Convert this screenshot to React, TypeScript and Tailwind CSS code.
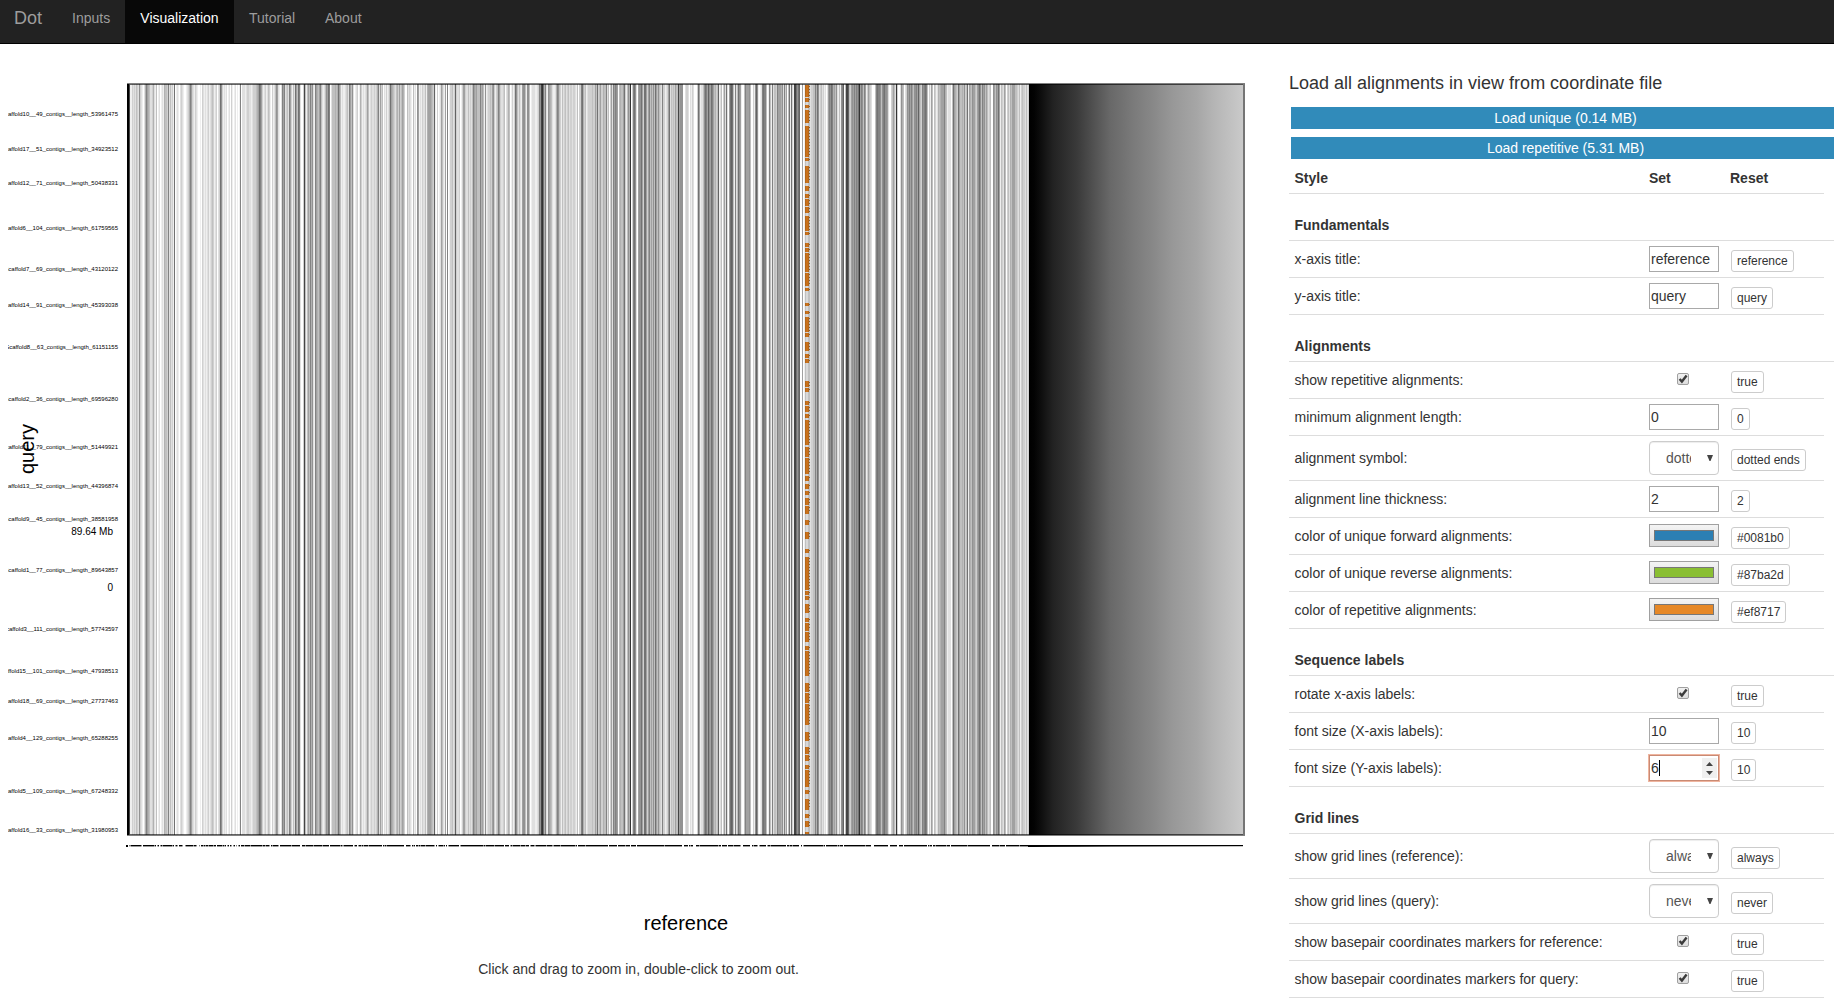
import React from "react";

/* Grey level of every pixel column of the grid, one hex digit each, from x=130. */
const COLUMNS = [
  "eecdcdbcd8", "cdefda79ab", "ddcadebfed", "fedeabbc7d", "bdce6fedef", "dcdeffedca",
  "79cdecdeff", "efcdededce", "dcbcedcfdc", "68cededfed", "fcefedfefe", "7fdddedccd",
  "dedcccba96", "79cedcedbc", "efcedb89de", "fd797dcbd7", "9cebd69b67", "dffc4beb9b",
  "7a8de79ab9", "7bdedb8967", "fdbbbaba69", "bedeedcbd7", "9b8dfedcfe", "acededc9be",
  "dcddcdca7d", "9cbfdecedb", "69abcdbac9", "cb9acffbdc", "defbedf89e", "decddbea99",
  "9abc5efcfe", "d9bde9f7fe", "ccbdc5cddc", "fec99cddbd", "cdb79a9bbb", "7a9be8edcc",
  "bc98cecb79", "cddcbfdcab", "fecec68bdb", "de988be88b", "fedddeedc7", "8436a7de89",
  "abdeeda78b", "cebdcbdcbd", "ccdccdebfc", "c76acbedcc", "ccbcc9b6cb", "9ccabb7dbf",
  "c9d79789fb", "abb96ceb8a", "3fc768df98", "869c669c97", "b9b8b69b8b", "cd7ccedc96",
  "dbcbc9bb49", "888ffdccdf", "decdfffc69", "eddb867958", "9679bacb5e", "dbfc9d6df9",
  "656be7db68", "9effb79998", "bffce858ef", "ed7677bfe7", "be7dbbc799", "9a8d7c9fb6",
  "e6ce446865", "ff9febccbb", "dccbb7a68d", "cbdcedfd97", "867a9b8deb", "e875fb445b",
  "c989797863", "978b79ec9b", "cdfffb7677", "8b876889df", "fcb9bd3cff", "d8abfdc897",
  "979b887959", "bc78767bfc", "e9bfbcedab", "a9997abedd", "dfb69abc69", "bbab8cb6e9",
  "ab899bc986", "8b798b9bdc", "bff89b8969", "ebcd9bfcbd", "ab999bbcdb", "ecbccdbdc",
].join("");

const shade = (digit: string) => {
  const v = parseInt(digit, 16) * 17;
  const g = v > 70 ? Math.round(v + (255 - v) * 0.08) : v;
  return `rgb(${g},${g},${g})`;
};

const ORANGE: [number, number][] = [
  [85, 97], [98, 102], [105, 108], [110, 123], [126, 157], [158, 161], [166, 183], [186, 191],
  [194, 198], [199, 206], [207, 213], [216, 231], [232, 235], [243, 247], [248, 252], [253, 272],
  [273, 286], [288, 291], [303, 306], [311, 314], [317, 332], [333, 337], [342, 351], [354, 358],
  [359, 363], [381, 387], [388, 392], [401, 405], [406, 412], [414, 418], [420, 445], [447, 457],
  [458, 474], [476, 481], [484, 489], [491, 495], [498, 505], [506, 514], [520, 525], [532, 539],
  [549, 553], [557, 590], [591, 595], [596, 600], [604, 613], [618, 622], [623, 631], [632, 642],
  [646, 650], [651, 676], [683, 692], [693, 703], [704, 725], [732, 741], [747, 754], [755, 761],
  [765, 769], [770, 787], [790, 794], [799, 810], [814, 818], [821, 827], [832, 834],
];

const LABELS: [string, number][] = [
  ["Scaffold10__49_contigs__length_53961475", 116],
  ["Scaffold17__51_contigs__length_34923512", 151],
  ["Scaffold12__71_contigs__length_50438331", 185],
  ["Scaffold6__104_contigs__length_61759565", 230],
  ["Scaffold7__69_contigs__length_43120122", 271],
  ["Scaffold14__91_contigs__length_45393038", 307],
  ["Scaffold8__63_contigs__length_61151155", 349],
  ["Scaffold2__36_contigs__length_69596280", 401],
  ["Scaffold11__79_contigs__length_51449921", 449],
  ["Scaffold13__52_contigs__length_44396874", 488],
  ["Scaffold9__45_contigs__length_38581958", 521],
  ["Scaffold1__77_contigs__length_89643857", 572],
  ["Scaffold3__111_contigs__length_57743597", 631],
  ["Scaffold15__101_contigs__length_47938513", 673],
  ["Scaffold18__69_contigs__length_27737463", 703],
  ["Scaffold4__129_contigs__length_65288255", 740],
  ["Scaffold5__109_contigs__length_67248332", 793],
  ["Scaffold16__33_contigs__length_31980953", 832],
];

const FADE: [number, string][] = [
  [1029, "#000"], [1034, "#030303"], [1040, "#0c0c0c"], [1053, "#222"], [1077, "#3a3a3a"],
  [1090, "#4c4c4c"], [1110, "#686868"], [1133, "#7a7a7a"], [1153, "#888"], [1173, "#989898"],
  [1197, "#a6a6a6"], [1213, "#b4b4b4"], [1243, "#cacaca"],
];

const FONT = "Liberation Sans, Arial, sans-serif";

/* The svg starts right below the 44px navigation bar, so shapes keep page coordinates. */
function DotPlot() {
  return (
    <svg width="1276" height="954" viewBox="0 44 1276 954" className="block shrink-0" fontFamily={FONT}>
      <defs>
        <linearGradient id="fade" gradientUnits="userSpaceOnUse" x1="1029" x2="1243" y1="0" y2="0">
          {FADE.map(([x, c]) => (
            <stop key={x} offset={(x - 1029) / 214} stopColor={c} />
          ))}
        </linearGradient>
        <clipPath id="labels">
          <rect x="8" y="44" width="112" height="800" />
        </clipPath>
      </defs>
      <g shapeRendering="crispEdges">
        {COLUMNS.split("").map((d, i) => (
          <rect key={i} x={130 + i} y={84} width={1} height={751} fill={shade(d)} />
        ))}
        <rect x="1029" y="84" width="214" height="751" fill="url(#fade)" />
        <rect x="806" y="85" width="2" height="749" fill="#d8d8d8" />
        {ORANGE.map(([a, b]) => (
          <g key={a}>
            <rect x="805" y={a} width="4" height={b - a} fill="#b3661b" />
            <rect x="806" y={a} width="2" height={b - a} fill="#c9711a" />
            {Array.from({ length: Math.floor((b - a) / 3) }, (_, k) => (
              <rect key={k} x="809" y={a + 1 + k * 3} width="1" height="1" fill="#8a6238" />
            ))}
          </g>
        ))}
        <rect x="127" y="83" width="1118" height="1" fill="#808080" />
        <rect x="127" y="84" width="1118" height="1" fill="#000" opacity=".6" />
        <rect x="127" y="834" width="1118" height="1" fill="#000" opacity=".6" />
        <rect x="127" y="835" width="1118" height="1" fill="#808080" />
        <rect x="1243" y="84" width="2" height="751" fill="#757575" />
        <rect x="127" y="84" width="2" height="751" fill="#000" />
        <rect x="129" y="84" width="1" height="751" fill="#444" />

        <rect x="126" y="845" width="2" height="2" fill="#000" />
        {COLUMNS.split("").map((d, i) => {
          const ink = Math.min(1, (15 - parseInt(d, 16)) / 2);
          return (
            <g key={i}>
              <rect x={129 + i} y={845} width={1} height={1} fill="#000" opacity={ink} />
              <rect x={129 + i} y={846} width={1} height={1} fill="#000" opacity={ink * 0.4} />
            </g>
          );
        })}
        <rect x="1028" y="845" width="215" height="1" fill="#000" />
        <rect x="1028" y="846" width="215" height="1" fill="url(#fade)" />
      </g>
      <g clipPath="url(#labels)" fontSize="6" textAnchor="end">
        {LABELS.map(([t, y]) => (
          <text key={y} x="118" y={y - 0.3}>{t}</text>
        ))}
      </g>
      <g fontSize="10" textAnchor="end">
        <text x="113" y="534.8">89.64 Mb</text>
        <text x="113" y="590.8">0</text>
      </g>
      <text fontSize="20" textAnchor="middle" transform="translate(34 449) rotate(-90)">query</text>
      <text x="686" y="930" fontSize="20" textAnchor="middle">reference</text>
      <text x="638.5" y="974" fontSize="14" textAnchor="middle" fill="#333">
        Click and drag to zoom in, double-click to zoom out.
      </text>
    </svg>
  );
}

function Field({ value, focused }: { value: string; focused?: boolean }) {
  return (
    <div
      className={
        focused
          ? "mt-[5px] flex h-[26px] w-[70px] items-center border border-[#c98a74] pl-px text-[14px] leading-5 shadow-[0_0_0_1px_#efb59f]"
          : "mt-[5px] flex h-[26px] w-[70px] items-center border border-[#a9a9a9] pl-px text-[14px] leading-5"
      }
    >
      <span>{value}</span>
      {focused && (
        <>
          <span className="h-4 w-px bg-black" />
          <span className="mr-px ml-auto flex h-5 w-[15px] flex-col items-center justify-center gap-[5px] bg-[#f0f0f0]">
            <svg width="7" height="4"><path d="M0 4L3.5 0L7 4Z" fill="#444" /></svg>
            <svg width="7" height="4"><path d="M0 0L3.5 4L7 0Z" fill="#444" /></svg>
          </span>
        </>
      )}
    </div>
  );
}

function Select({ value }: { value: string }) {
  return (
    <div className="mt-[5px] flex h-[34px] w-[70px] items-center rounded border border-[#ccc] pl-4 text-[14px] leading-5 text-[#555] shadow-[inset_0_1px_1px_rgba(0,0,0,0.075)]">
      <span className="w-[24.5px] overflow-hidden whitespace-nowrap">{value}</span>
      <svg width="6" height="6" className="mr-[5px] mb-px ml-auto"><path d="M0 0H6L3.5 6H2.5Z" fill="#444" /></svg>
    </div>
  );
}

function Check() {
  return (
    <svg width="13" height="13" className="mt-[11px] ml-7">
      <defs>
        <linearGradient id="cb" x1="0" x2="0" y1="0" y2="1">
          <stop offset="0" stopColor="#f2f2f2" />
          <stop offset="1" stopColor="#dcdcdc" />
        </linearGradient>
      </defs>
      <rect x=".5" y=".5" width="11" height="11" rx="1.5" fill="url(#cb)" stroke="#a0a0a0" />
      <path d="M2.6 6L4.9 8.6L9.6 2.6" fill="none" stroke="#3c3c3c" strokeWidth="2.4" />
    </svg>
  );
}

function Swatch({ color }: { color: string }) {
  return (
    <div className="mt-[6px] flex h-[23px] w-[70px] items-center justify-center border border-[#a0a0a0] bg-linear-to-b from-[#f4f4f4] to-[#dcdcdc]">
      <div className="h-[11px] w-[60px] border border-[#777]" style={{ backgroundColor: color }} />
    </div>
  );
}

type RowProps = { label: string; reset: string; tall?: boolean; children: React.ReactNode };

function Row({ label, reset, tall, children }: RowProps) {
  return (
    <div
      className={
        tall
          ? "grid h-[45px] w-[535px] grid-cols-[354.5px_82px_1fr] items-start border-b border-[#ddd] pl-[5.5px]"
          : "grid h-[37px] w-[535px] grid-cols-[354.5px_82px_1fr] items-start border-b border-[#ddd] pl-[5.5px]"
      }
    >
      <div className={tall ? "pt-[12px]" : "pt-[8px]"}>{label}</div>
      <div>{children}</div>
      <div className={tall ? "flex pt-[13px]" : "flex pt-[9px]"}>
        <span className="h-[22px] rounded-[3px] border border-[#ccc] px-[5px] py-px text-[12px] leading-[18px] whitespace-nowrap">
          {reset}
        </span>
      </div>
    </div>
  );
}

function Section({ title }: { title: string }) {
  return (
    <div className="flex h-[47px] w-[560px] items-end border-b border-[#ddd] pb-[5px] pl-[5.5px] font-bold">
      {title}
    </div>
  );
}

export default function App() {
  return (
    <div className="h-[998px] w-[1834px] overflow-hidden bg-white font-['Liberation_Sans',Arial,sans-serif] text-[14px] leading-5 text-[#333]">
      <nav className="flex h-[44px] border-b border-black bg-[#222] text-[#9d9d9d]">
        <div className="w-[57px] pt-[8px] pl-[14px] text-[18px]">Dot</div>
        <div className="w-[68px] pt-[8px] pl-[15px]">Inputs</div>
        <div className="w-[109px] bg-[#080808] pt-[8px] text-center text-white">Visualization</div>
        <div className="w-[76px] pt-[8px] pl-[15px]">Tutorial</div>
        <div className="pt-[8px] pl-[15px]">About</div>
      </nav>
      <main className="flex h-[954px]">
        <DotPlot />
        <aside className="w-[558px] shrink-0 overflow-hidden pl-[13px]">
          <h4 className="pt-[29px] text-[18px] leading-5">Load all alignments in view from coordinate file</h4>
          <div className="mt-[14px] ml-[2px] h-[22px] w-[549px] bg-[#318bba] text-center leading-[22px] text-white">Load unique (0.14 MB)</div>
          <div className="mt-[8px] ml-[2px] h-[22px] w-[549px] bg-[#318bba] text-center leading-[22px] text-white">Load repetitive (5.31 MB)</div>
          <div className="grid h-[35px] w-[535px] grid-cols-[354.5px_81px_1fr] border-b border-[#ddd] pt-[9px] pl-[5.5px] font-bold">
            <span>Style</span>
            <span>Set</span>
            <span>Reset</span>
          </div>
          <Section title="Fundamentals" />
          <Row label="x-axis title:" reset="reference"><Field value="reference" /></Row>
          <Row label="y-axis title:" reset="query"><Field value="query" /></Row>
          <Section title="Alignments" />
          <Row label="show repetitive alignments:" reset="true"><Check /></Row>
          <Row label="minimum alignment length:" reset="0"><Field value="0" /></Row>
          <Row label="alignment symbol:" reset="dotted ends" tall><Select value="dotted ends" /></Row>
          <Row label="alignment line thickness:" reset="2"><Field value="2" /></Row>
          <Row label="color of unique forward alignments:" reset="#0081b0"><Swatch color="#2c7fb3" /></Row>
          <Row label="color of unique reverse alignments:" reset="#87ba2d"><Swatch color="#8abf33" /></Row>
          <Row label="color of repetitive alignments:" reset="#ef8717"><Swatch color="#e68827" /></Row>
          <Section title="Sequence labels" />
          <Row label="rotate x-axis labels:" reset="true"><Check /></Row>
          <Row label="font size (X-axis labels):" reset="10"><Field value="10" /></Row>
          <Row label="font size (Y-axis labels):" reset="10"><Field value="6" focused /></Row>
          <Section title="Grid lines" />
          <Row label="show grid lines (reference):" reset="always" tall><Select value="always" /></Row>
          <Row label="show grid lines (query):" reset="never" tall><Select value="never" /></Row>
          <Row label="show basepair coordinates markers for reference:" reset="true"><Check /></Row>
          <Row label="show basepair coordinates markers for query:" reset="true"><Check /></Row>
        </aside>
      </main>
    </div>
  );
}
